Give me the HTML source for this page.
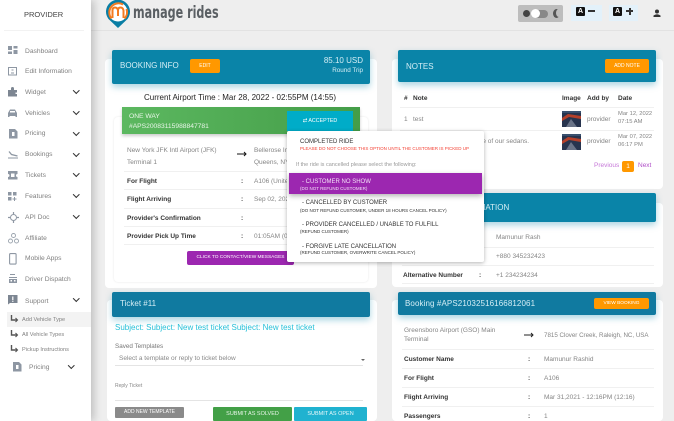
<!DOCTYPE html>
<html><head><meta charset="utf-8"><style>
html,body{margin:0;padding:0;width:674px;height:421px;overflow:hidden}
body{background:#eee;font-family:"Liberation Sans",sans-serif;color:#555}
#w{position:absolute;left:0;top:0;width:674px;height:421px;overflow:hidden;background:#eee;filter:blur(.35px)}
.low{position:absolute;left:0;top:0;width:674px;height:421px;filter:blur(.35px)}
.a{position:absolute;white-space:nowrap}
.card{position:absolute;background:#fff;border-radius:4px}
.hd{position:absolute;background:#0a84a8;box-shadow:0 3px 7px rgba(10,132,168,.35);border-radius:2px}
.btn{position:absolute;background:#ff9800;color:#fff;border-radius:2px;text-align:center;font-size:5px}
.side{font-size:6.700px;color:#808080;left:25px}
.chev{position:absolute;width:3.500px;height:3.500px;border-right:1.300px solid #333;border-bottom:1.300px solid #333;transform:rotate(45deg)}
.ic{position:absolute;left:8px}
.line{position:absolute;height:1px;background:#f0f0f0}
.b{font-weight:bold;color:#333;font-size:6.500px}
.g{color:#858585;font-size:6.500px}
.hw{color:#d5eef5;font-size:8px}
</style></head><body><div id="w">

<!-- top bar -->
<div class="a" style="left:91px;top:30px;width:583px;height:1px;background:#e2e2e2"></div>
<svg class="a" style="left:105px;top:0" width="27" height="29" viewBox="0 0 27 29">
<path d="M3.500 19A12 12 0 1 1 22.500 19L13 28Z" fill="#0a7ea4"/>
<circle cx="13" cy="12" r="9.500" fill="#fff"/>
<path d="M6.500 18.500A9.200 9.200 0 0 1 18 4.500" fill="none" stroke="#f47b20" stroke-width="2"/>
<path d="M21.500 9A9.200 9.200 0 0 1 19.500 18.500" fill="none" stroke="#f47b20" stroke-width="2"/>
<path d="M7.500 18V10.500Q7.500 7.500 10 7.500T13 10.500V16M13 10.500Q13 7.500 15.500 7.500T18.500 10.500V18" fill="none" stroke="#f47b20" stroke-width="2"/>
</svg>
<div class="a" style="left:133px;top:2.500px;font-size:17px;font-weight:bold;color:#5a5f63;font-family:'DejaVu Sans Condensed','DejaVu Sans',sans-serif;transform-origin:0 0;transform:scaleX(.73)">manage rides</div>

<div class="a" style="left:518px;top:5px;width:45px;height:17px;background:#bdbdbd;border-radius:2px"></div>
<div class="a" style="left:523px;top:10px;width:7px;height:7px;background:#444;border-radius:50%"></div>
<div class="a" style="left:533px;top:10px;width:15px;height:8px;background:#888;border-radius:4px"></div>
<div class="a" style="left:531px;top:9px;width:9px;height:9px;background:#fff;border-radius:50%"></div>
<div class="a" style="left:553px;top:9px;width:7px;height:9px;background:#555;border-radius:50%"></div>
<div class="a" style="left:556px;top:9px;width:6px;height:8px;background:#bdbdbd;border-radius:50%"></div>

<div class="a" style="left:571px;top:5px;width:31px;height:16px;background:#e3f1fa"></div>
<div class="a" style="left:576px;top:7px;width:9px;height:9px;background:#111;color:#fff;font-size:7px;font-weight:bold;text-align:center;line-height:9px;border-radius:1px">A</div>
<div class="a" style="left:588px;top:10px;width:7px;height:2px;background:#333"></div>
<div class="a" style="left:609px;top:5px;width:29px;height:16px;background:#e3f1fa"></div>
<div class="a" style="left:613px;top:7px;width:9px;height:9px;background:#111;color:#fff;font-size:7px;font-weight:bold;text-align:center;line-height:9px;border-radius:1px">A</div>
<div class="a" style="left:626px;top:10px;width:7px;height:2px;background:#333"></div>
<div class="a" style="left:628.500px;top:7.500px;width:2px;height:7px;background:#333"></div>
<svg class="a" style="left:653px;top:9px" width="8" height="9"><circle cx="4" cy="2.500" r="2" fill="#333"/><path d="M.5 8V6.500Q4 4 7.500 6.500V8Z" fill="#333"/></svg>

<!-- sidebar -->
<div class="a" style="left:0;top:0;width:91px;height:421px;background:#fff;box-shadow:3px 0 8px rgba(0,0,0,.2)"></div>
<div class="a" style="left:24px;top:10px;font-size:7.500px;color:#444">PROVIDER</div>
<div class="a" style="left:4px;top:30px;width:80px;height:1px;background:#f2f2f2"></div>

<svg class="ic" style="top:46px" width="10" height="9" fill="#8e97a3"><rect width="4" height="4"/><rect x="5.500" width="4" height="2.500"/><rect y="5.500" width="4" height="2.500"/><rect x="5.500" y="4" width="4" height="4"/></svg>
<div class="a side" style="top:47.500px">Dashboard</div>
<svg class="ic" style="top:67px" width="10" height="9" fill="none" stroke="#8e97a3"><rect x=".5" y=".5" width="8" height="7.500"/><path d="M3 6H6M3.500 3H5.500"/></svg>
<div class="a side" style="top:68px">Edit Information</div>
<svg class="ic" style="top:87px" width="10" height="10" fill="#7d8692"><path d="M0 3H3V1.500A1.500 1.500 0 0 1 6 1.500V3H9V5.500H7.500V7H9V9.500H0Z"/></svg>
<div class="a side" style="top:89px">Widget</div><div class="chev" style="left:74px;top:88px"></div>
<svg class="ic" style="top:109px" width="10" height="9" fill="#8e97a3"><path d="M2 .5H7L9 4V8H7.500V7H1.500V8H0V4Z"/><rect x="2" y="2" width="5" height="1.500" fill="#fff"/></svg>
<div class="a side" style="top:110px">Vehicles</div><div class="chev" style="left:74px;top:109px"></div>
<svg class="ic" style="left:9px;top:129px" width="9" height="10" fill="#8e97a3"><path d="M0 0H6L8.500 2.500V9.500H0Z"/><rect x="3" y="3" width="2.500" height="4" fill="#fff"/></svg>
<div class="a side" style="top:130px">Pricing</div><div class="chev" style="left:74px;top:130px"></div>
<svg class="ic" style="top:150px" width="11" height="9" fill="none" stroke="#8e97a3"><path d="M0 8H10"/><path d="M1 1.500L3.500 4.500L9.500 6" stroke-width="1.300"/></svg>
<div class="a side" style="top:151px">Bookings</div><div class="chev" style="left:74px;top:151px"></div>
<svg class="ic" style="top:171px" width="10" height="9" fill="#8e97a3"><path d="M0 0H9.500V3A1.500 1.500 0 0 0 9.500 6V8.500H0V6A1.500 1.500 0 0 0 0 3Z"/><rect x="3" y="2.500" width="3.500" height="3.500" fill="#fff"/></svg>
<div class="a side" style="top:172px">Tickets</div><div class="chev" style="left:74px;top:171px"></div>
<svg class="ic" style="top:192px" width="10" height="9" fill="#8e97a3"><rect width="3.500" height="3.500"/><rect x="5" width="3.500" height="3.500"/><rect y="5" width="3.500" height="3.500"/><path d="M6 5H7V6.500H8.500V7.500H7V9H6V7.500H4.500V6.500H6Z"/></svg>
<div class="a side" style="top:193px">Features</div><div class="chev" style="left:74px;top:192px"></div>
<svg class="ic" style="top:212px" width="11" height="11" fill="none" stroke="#8e97a3"><circle cx="5.500" cy="5.500" r="3"/><path d="M5.500 0V2M5.500 9V11M0 5.500H2M9 5.500H11" stroke-width="1.200"/></svg>
<div class="a side" style="top:214px">API Doc</div><div class="chev" style="left:74px;top:213px"></div>
<svg class="ic" style="top:233px" width="11" height="11" fill="none" stroke="#9aa3ad" stroke-width=".9"><circle cx="5.500" cy="2.500" r="2"/><circle cx="2.500" cy="8" r="2"/><circle cx="8.500" cy="8" r="2"/></svg>
<div class="a side" style="top:235px">Affiliate</div>
<svg class="ic" style="left:9px;top:253px" width="8" height="12" fill="none" stroke="#8e97a3" stroke-width="1.100"><rect x=".6" y=".6" width="6.500" height="10.500" rx="1"/></svg>
<div class="a side" style="top:255px">Mobile Apps</div>
<svg class="ic" style="left:9px;top:274px" width="9" height="10" fill="#8e97a3"><rect x="1" y="0" width="5" height="1"/><rect x="0" y="3" width="8" height="1"/><rect x="0" y="5" width="8" height="4"/><rect x="1.500" y="6" width="1.500" height="1.500" fill="#fff"/><rect x="5" y="6" width="1.500" height="1.500" fill="#fff"/></svg>
<div class="a side" style="top:276px">Driver Dispatch</div>
<svg class="ic" style="top:295px" width="10" height="10" fill="#7d8692"><path d="M0 0H9.500V8H2L0 9.500Z"/><rect x="4.200" y="1.500" width="1.200" height="3.500" fill="#fff"/><rect x="4.200" y="5.700" width="1.200" height="1.200" fill="#fff"/></svg>
<div class="a side" style="top:297.500px">Support</div><div class="chev" style="left:74px;top:296px"></div>

<div class="a" style="left:7px;top:312px;width:84px;height:15px;background:#f3f3f3"></div>
<svg class="a" style="left:10px;top:315px" width="9" height="8" fill="none" stroke="#555" stroke-width="1.400"><path d="M1.500 0V5H7"/><path d="M5.500 3L7.500 5L5.500 7" stroke-width="1.100"/></svg>
<div class="a side" style="left:22px;top:317px;font-size:5.600px">Add Vehicle Type</div>
<svg class="a" style="left:10px;top:330px" width="9" height="8" fill="none" stroke="#555" stroke-width="1.400"><path d="M1.500 0V5H7"/><path d="M5.500 3L7.500 5L5.500 7" stroke-width="1.100"/></svg>
<div class="a side" style="left:22px;top:332px;font-size:5.600px">All Vehicle Types</div>
<svg class="a" style="left:10px;top:345px" width="9" height="8" fill="none" stroke="#555" stroke-width="1.400"><path d="M1.500 0V5H7"/><path d="M5.500 3L7.500 5L5.500 7" stroke-width="1.100"/></svg>
<div class="a side" style="left:22px;top:347px;font-size:5.600px">Pickup Instructions</div>
<svg class="ic" style="left:13px;top:362px" width="9" height="10" fill="#8e97a3"><path d="M0 0H6L8.500 2.500V9.500H0Z"/><rect x="3" y="3" width="2.500" height="4" fill="#fff"/></svg>
<div class="a side" style="left:29px;top:364px">Pricing</div><div class="chev" style="left:69px;top:363px"></div>

<!-- Booking card -->
<div class="card" style="left:105px;top:59px;width:272px;height:229px"></div>
<div class="hd" style="left:112px;top:50px;width:258px;height:34px"></div>
<div class="a hw" style="left:120px;top:61px">BOOKING INFO</div>
<div class="btn" style="left:190px;top:59px;width:30px;height:14px;line-height:14px">EDIT</div>
<div class="a" style="left:303px;top:56px;font-size:8px;color:#d5eef5;width:60px;text-align:right">85.10 USD</div>
<div class="a" style="left:303px;top:67px;font-size:6.300px;color:#d5eef5;width:60px;text-align:right">Round Trip</div>
<div class="a" style="left:144px;top:93px;font-size:8px;color:#222">Current Airport Time : Mar 28, 2022 - 02:55PM (14:55)</div>
<div class="a" style="left:114px;top:117px;width:254px;height:165px;border-radius:4px;box-shadow:0 0 2px rgba(0,0,0,.1)"></div>
<div class="a" style="left:122px;top:107px;width:238px;height:27px;background:linear-gradient(90deg,#5cb860,#449d48);box-shadow:0 2px 3px rgba(0,0,0,.2)"></div>
<div class="a" style="left:129px;top:113px;font-size:6.700px;color:#e8f5e8">ONE WAY</div>
<div class="a" style="left:129px;top:123px;font-size:6.700px;color:#e8f5e8">#APS20083115988847781</div>
<div class="a" style="left:287px;top:111px;width:66px;height:20px;background:#00acc8;color:#fff;font-size:5.300px;text-align:center;line-height:20px">⇄ ACCEPTED</div>

<div class="a g" style="left:127px;top:147px">New York JFK Intl Airport (JFK)</div>
<div class="a g" style="left:127px;top:159px">Terminal 1</div>
<svg class="a" style="left:237px;top:151px" width="10" height="6" fill="none" stroke="#111"><path d="M0 3H9M7 1L9 3L7 5"/></svg>
<div class="a g" style="left:254px;top:147px">Bellerose Inn, NY</div>
<div class="a g" style="left:254px;top:159px">Queens, NY</div>
<div class="line" style="left:124px;top:171px;width:240px"></div>
<div class="a b" style="left:127px;top:177.500px">For Flight</div><div class="a b" style="left:241px;top:177.500px">:</div><div class="a g" style="left:254px;top:177.500px">A106 (United)</div>
<div class="line" style="left:124px;top:189px;width:240px"></div>
<div class="a b" style="left:127px;top:196px">Flight Arriving</div><div class="a b" style="left:241px;top:196px">:</div><div class="a g" style="left:254px;top:196px">Sep 02, 2020</div>
<div class="line" style="left:124px;top:208px;width:240px"></div>
<div class="a b" style="left:127px;top:214.500px">Provider's Confirmation</div><div class="a b" style="left:241px;top:214.500px">:</div>
<div class="line" style="left:124px;top:226px;width:240px"></div>
<div class="a b" style="left:127px;top:233px">Provider Pick Up Time</div><div class="a b" style="left:241px;top:233px">:</div><div class="a g" style="left:254px;top:233px">01:05AM (01:05)</div>
<div class="line" style="left:124px;top:244px;width:240px"></div>
<div class="a" style="left:187px;top:251px;width:107px;height:14px;background:#9c27b0;color:#fff;font-size:4.800px;line-height:14px;text-align:center;border-radius:2px">CLICK TO CONTACT/VIEW MESSAGES</div>

<!-- Notes -->
<div class="card" style="left:392px;top:59px;width:271px;height:130px"></div>
<div class="hd" style="left:398px;top:50px;width:258px;height:32px"></div>
<div class="a hw" style="left:406px;top:62px">NOTES</div>
<div class="btn" style="left:605px;top:59px;width:44px;height:14px;line-height:14px">ADD NOTE</div>
<div class="a b" style="left:404px;top:95px">#</div>
<div class="a b" style="left:413px;top:95px">Note</div>
<div class="a b" style="left:562px;top:95px">Image</div>
<div class="a b" style="left:587px;top:95px">Add by</div>
<div class="a b" style="left:618px;top:95px">Date</div>
<div class="line" style="left:400px;top:107px;width:254px"></div>
<div class="a g" style="left:404px;top:116px">1</div><div class="a g" style="left:413px;top:116px">test</div>
<svg class="a" style="left:562px;top:111px" width="19" height="16"><rect width="19" height="16" fill="#27344e"/><path d="M0 7L6 3L19 5V8L7 6L0 10Z" fill="#b5402a"/><path d="M4 16L9 8L15 16Z" fill="#6a7488"/><rect width="19" height="2" fill="#39506e"/></svg>
<div class="a g" style="left:587px;top:116px">provider</div>
<div class="a g" style="left:618px;top:111px;font-size:5.800px">Mar 12, 2022</div><div class="a g" style="left:618px;top:119px;font-size:5.800px">07:15 AM</div>
<div class="line" style="left:400px;top:130px;width:254px"></div>
<div class="a g" style="left:479px;top:138px;width:50px;text-align:right">re of our sedans.</div>
<svg class="a" style="left:562px;top:134px" width="19" height="16"><rect width="19" height="16" fill="#27344e"/><path d="M0 7L6 3L19 5V8L7 6L0 10Z" fill="#b5402a"/><path d="M4 16L9 8L15 16Z" fill="#6a7488"/><rect width="19" height="2" fill="#39506e"/></svg>
<div class="a g" style="left:587px;top:138px">provider</div>
<div class="a g" style="left:618px;top:134px;font-size:5.800px">Mar 07, 2022</div><div class="a g" style="left:618px;top:142px;font-size:5.800px">06:17 PM</div>
<div class="a" style="left:594px;top:162px;font-size:6.500px;color:#c678d8">Previous</div>
<div class="a" style="left:622px;top:161px;width:12px;height:11px;background:#ff9800;color:#fff;font-size:6.500px;text-align:center;line-height:11px;border-radius:2px">1</div>
<div class="a" style="left:638px;top:162px;font-size:6.500px;color:#b04fc8">Next</div>

<!-- Info -->
<div class="card" style="left:392px;top:203px;width:271px;height:84px"></div>
<div class="hd" style="left:398px;top:193px;width:258px;height:29px"></div>
<div class="a hw" style="left:406px;top:203px">CUSTOMER INFORMATION</div>
<div class="a g" style="left:496px;top:234px">Mamunur Rash</div>
<div class="line" style="left:402px;top:247px;width:252px"></div>
<div class="a g" style="left:496px;top:253px">+880 345232423</div>
<div class="line" style="left:402px;top:265px;width:252px"></div>
<div class="a b" style="left:403px;top:272px">Alternative Number</div><div class="a b" style="left:479px;top:272px">:</div>
<div class="a g" style="left:496px;top:272px">+1 234234234</div>
<div class="line" style="left:402px;top:283px;width:252px"></div>

<!-- Dropdown -->
<div class="a" style="left:287px;top:131px;width:197px;height:131px;background:#fff;box-shadow:0 1px 4px rgba(0,0,0,.3);border-radius:2px"></div>
<div class="a" style="left:300px;top:139px;font-size:6px;color:#333">COMPLETED RIDE</div>
<div class="a" style="left:300px;top:145.500px;font-size:4.500px;color:#f44336">PLEASE DO NOT CHOOSE THIS OPTION UNTIL THE CUSTOMER IS PICKED UP</div>
<div class="a" style="left:296px;top:162px;font-size:5.500px;color:#999">If the ride is cancelled please select the following:</div>
<div class="a" style="left:289px;top:173px;width:193px;height:21px;background:#9c27b0;box-shadow:0 2px 5px rgba(0,0,0,.3)"></div>
<div class="a" style="left:302px;top:178.500px;font-size:6px;color:#f3e0f7">- CUSTOMER NO SHOW</div>
<div class="a" style="left:300px;top:185.500px;font-size:4.500px;color:#f3e0f7">(DO NOT REFUND CUSTOMER)</div>
<div class="a" style="left:302px;top:199.500px;font-size:6px;color:#333">- CANCELLED BY CUSTOMER</div>
<div class="a" style="left:300px;top:207.500px;font-size:4.500px;color:#333">(DO NOT REFUND CUSTOMER, UNDER 18 HOURS CANCEL POLICY)</div>
<div class="a" style="left:302px;top:221.500px;font-size:6px;color:#333">- PROVIDER CANCELLED / UNABLE TO FULFILL</div>
<div class="a" style="left:300px;top:228.500px;font-size:4.500px;color:#333">(REFUND CUSTOMER)</div>
<div class="a" style="left:302px;top:243.500px;font-size:6px;color:#333">- FORGIVE LATE CANCELLATION</div>
<div class="a" style="left:300px;top:249.500px;font-size:4.500px;color:#333">(REFUND CUSTOMER, OVERWRITE CANCEL POLICY)</div>

<div class="low">
<!-- Ticket -->
<div class="card" style="left:107px;top:300px;width:270px;height:121px"></div>
<div class="hd" style="left:112px;top:292px;width:258px;height:25px;background:#107aa0"></div>
<div class="a hw" style="left:120px;top:299px">Ticket #11</div>
<div class="a" style="left:115px;top:322.500px;font-size:8px;color:#26c0d8">Subject: Subject: New test ticket Subject: New test ticket</div>
<div class="a" style="left:115px;top:343px;font-size:6.300px;color:#777">Saved Templates</div>
<div class="a" style="left:119px;top:355px;font-size:6.500px;color:#888">Select a template or reply to ticket below</div>
<div class="a" style="left:361px;top:359px;border:2px solid transparent;border-top:2px solid #666"></div>
<div class="a" style="left:115px;top:365px;width:248px;height:1px;background:#e4e4e4"></div>
<div class="a" style="left:115px;top:383px;font-size:5px;color:#888">Reply Ticket</div>
<div class="a" style="left:115px;top:400px;width:248px;height:1px;background:#e4e4e4"></div>
<div class="a" style="left:115px;top:407px;width:69px;height:11px;background:#8a8a8a;color:#fff;font-size:5px;text-align:center;line-height:11px;border-radius:1px">ADD NEW TEMPLATE</div>
<div class="a" style="left:213px;top:407px;width:79px;height:14px;background:#43a047;color:#e8f5e8;font-size:5.500px;text-align:center;line-height:14px;border-radius:1px">SUBMIT AS SOLVED</div>
<div class="a" style="left:294px;top:407px;width:73px;height:14px;background:#20b2d0;color:#e8f8fa;font-size:5.500px;text-align:center;line-height:14px;border-radius:1px">SUBMIT AS OPEN</div>

<!-- Booking 2 -->
<div class="card" style="left:392px;top:300px;width:271px;height:121px"></div>
<div class="hd" style="left:398px;top:292px;width:258px;height:23px;background:#107aa0"></div>
<div class="a" style="left:405px;top:299px;font-size:8px;color:#d5eef5;letter-spacing:.1px">Booking #APS21032516166812061</div>
<div class="btn" style="left:594px;top:298px;width:55px;height:11px;line-height:11px;font-size:4.800px">VIEW BOOKING</div>
<div class="a g" style="left:404px;top:327px">Greensboro Airport (GSO) Main</div>
<div class="a g" style="left:404px;top:336px">Terminal</div>
<svg class="a" style="left:524px;top:332px" width="10" height="6" fill="none" stroke="#222"><path d="M0 3H9M7 1L9 3L7 5"/></svg>
<div class="a g" style="left:544px;top:332px;font-size:6.200px">7815 Clover Creek, Raleigh, NC, USA</div>
<div class="line" style="left:402px;top:349px;width:252px"></div>
<div class="a b" style="left:404px;top:356px">Customer Name</div><div class="a b" style="left:528px;top:356px">:</div><div class="a g" style="left:544px;top:356px">Mamunur Rashid</div>
<div class="line" style="left:402px;top:368px;width:252px"></div>
<div class="a b" style="left:404px;top:375px">For Flight</div><div class="a b" style="left:528px;top:375px">:</div><div class="a g" style="left:544px;top:375px">A106</div>
<div class="line" style="left:402px;top:387px;width:252px"></div>
<div class="a b" style="left:404px;top:394px">Flight Arriving</div><div class="a b" style="left:528px;top:394px">:</div><div class="a g" style="left:544px;top:394px">Mar 31,2021 - 12:16PM (12:16)</div>
<div class="line" style="left:402px;top:406px;width:252px"></div>
<div class="a b" style="left:404px;top:413px">Passengers</div><div class="a b" style="left:528px;top:413px">:</div><div class="a g" style="left:544px;top:413px">1</div>
</div>
</div></body></html>
